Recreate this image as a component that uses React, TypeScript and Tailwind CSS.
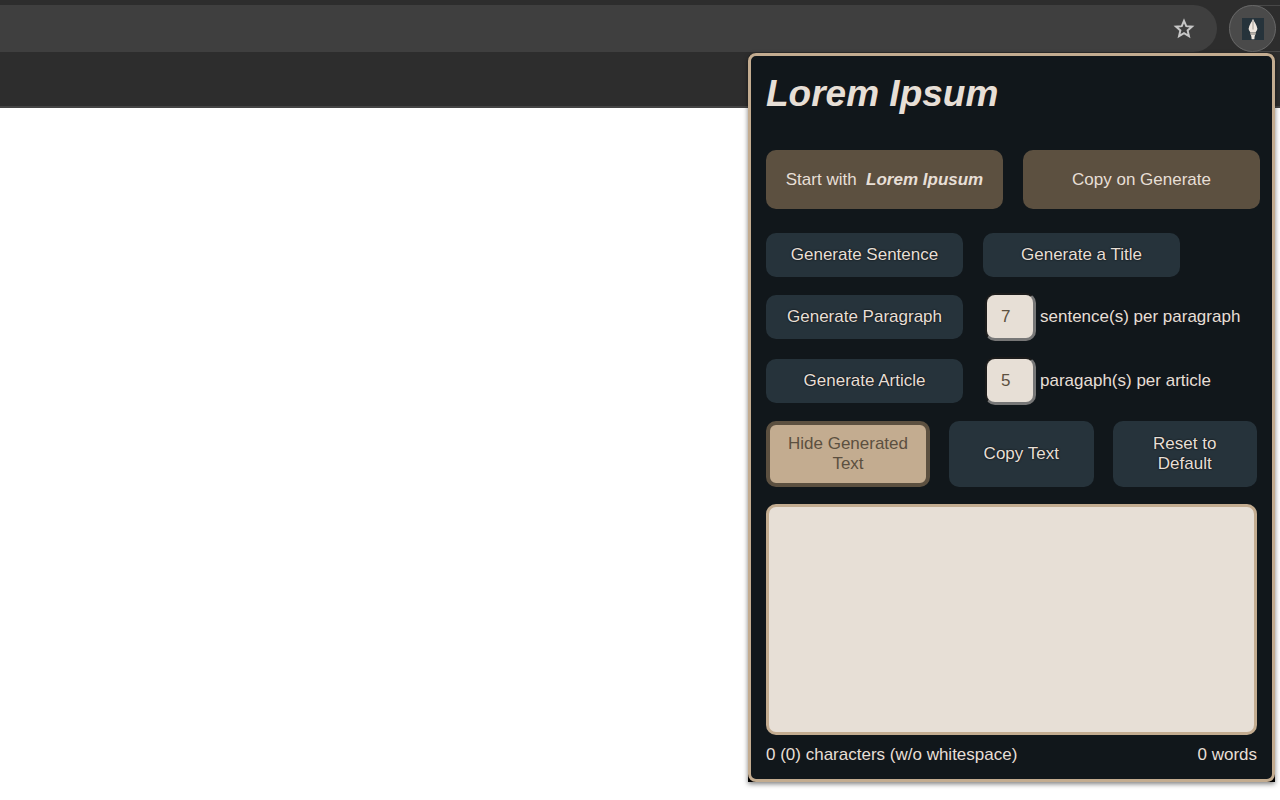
import { useState } from "react";

const actionButton =
  "rounded-[10px] bg-[#26333b] text-[#e7dfd6] text-center leading-5 text-shadow-[0_0_2px_#000]";
const toggleButton =
  "h-[59px] flex-1 rounded-[10px] bg-[#5c5040] text-[#e7dfd6] whitespace-pre";
const numberInput =
  "w-[51px] h-12 rounded-[10px] border-2 border-r-[3px] border-b-[3px] border-t-[#1c1c1c] border-l-[#1c1c1c] border-r-[#777777] border-b-[#777777] bg-[#e7dfd6] pl-[14px] text-[#5c5040]";

const StarIcon = () => (
  <svg width="24" height="24" viewBox="0 0 24 24" fill="none" stroke="#c7c7c7" strokeWidth="2" aria-hidden="true">
    <path d="M12 3.800l2.250 5.350 5.750.48-4.370 3.800 1.320 5.650L12 16.050l-4.950 3.030 1.320-5.650L4 9.630l5.750-.48z" />
  </svg>
);

const PenIcon = () => (
  <svg width="22" height="22" viewBox="0 0 22 22" aria-hidden="true">
    <rect width="22" height="22" fill="#26333b" />
    <path d="M11 .8C10.200 3.500 7 7 6.600 10.800c.2 1.500 1.200 2.600 1.800 3.700h5.200c.6-1.100 1.600-2.200 1.800-3.700C15 7 11.800 3.500 11 .8z" fill="#eee6de" />
    <path d="M11 3v8.500" stroke="#8b867e" strokeWidth="0.800" />
    <path d="M8.200 14.500h5.600v2H8.200z" fill="#b5ada4" />
    <path d="M8.600 16.500h4.800c-.7 1.200-.9 2.800-1 4.700H9.600c-.1-1.900-.3-3.500-1-4.700z" fill="#eee6de" />
  </svg>
);

const BrowserBar = () => (
  <header className="h-[108px] border-b-2 border-[#444444] bg-[#2d2d2d] pt-[5px]">
    <div className="flex items-center gap-3">
      <div className="flex h-[47px] flex-1 items-center justify-end rounded-r-full bg-[#3f3f3f] pr-[21px]">
        <button type="button" aria-label="Bookmark this page">
          <StarIcon />
        </button>
      </div>
      <div className="flex h-[47px] w-[51px] items-center rounded-l-full border-y border-[#484848]">
        <button
          type="button"
          aria-label="Lorem Ipsum"
          className="flex size-[47px] shrink-0 items-center justify-center rounded-full border border-[#686868] bg-[#4a4a4a]"
        >
          <PenIcon />
        </button>
      </div>
    </div>
  </header>
);

const Popup = () => {
  const [text, setText] = useState("");
  const [hidden, setHidden] = useState(false);
  const words = text.split(/\s+/).filter(Boolean).length;

  return (
    <section className="absolute top-[53px] right-[5px] w-[527px] rounded-t-lg bg-black shadow-[0_2px_5px_rgba(0,0,0,0.5)]">
      <div className="rounded-lg border-[3px] border-[#c3ac90] bg-[#11171b] px-[15px] pt-[14px] pb-3 text-[17px] leading-6 text-[#e7dfd6]">
        <h1 className="text-[37px] leading-[48px] font-bold italic">Lorem Ipsum</h1>

        <div className="-mr-[3px] mt-8 flex gap-5">
          <button type="button" aria-pressed="true" className={toggleButton}>
            Start with  <em className="font-bold">Lorem Ipusum</em>
          </button>
          <button type="button" aria-pressed="true" className={toggleButton}>
            Copy on Generate
          </button>
        </div>

        <div className="mt-6 flex gap-5">
          <button type="button" className={`${actionButton} h-11 w-[197px]`}>Generate Sentence</button>
          <button type="button" className={`${actionButton} h-11 w-[197px]`}>Generate a Title</button>
        </div>

        <div className="mt-4 flex items-center">
          <button type="button" className={`${actionButton} mr-[22px] h-11 w-[197px]`}>Generate Paragraph</button>
          <input id="sentences" type="number" min="1" defaultValue={7} className={numberInput} />
          <label htmlFor="sentences" className="ml-1">sentence(s) per paragraph</label>
        </div>

        <div className="mt-4 flex items-center">
          <button type="button" className={`${actionButton} mr-[22px] h-11 w-[197px]`}>Generate Article</button>
          <input id="paragraphs" type="number" min="1" defaultValue={5} className={numberInput} />
          <label htmlFor="paragraphs" className="ml-1">paragaph(s) per article</label>
        </div>

        <div className="mt-4 grid grid-cols-[164px_1fr_1fr] gap-[19px]">
          <button
            type="button"
            aria-pressed={!hidden}
            onClick={() => setHidden(!hidden)}
            className="h-[66px] rounded-[10px] border-4 border-[#5c5040] bg-[#c3ac90] px-3 leading-5 text-[#5c5040]"
          >
            Hide Generated Text
          </button>
          <button type="button" className={`${actionButton} px-5`}>Copy Text</button>
          <button type="button" className={`${actionButton} px-9`}>Reset to Default</button>
        </div>

        <textarea
          aria-label="Generated text"
          value={text}
          onChange={(e) => setText(e.target.value)}
          className={`mt-[17px] h-[231px] w-full resize-none rounded-[10px] border-[3px] border-[#c3ac90] bg-[#e7dfd6] p-3 text-[#5c5040] ${
            hidden ? "hidden" : "block"
          }`}
        />

        <div className="mt-2 flex justify-between">
          <span>
            {text.length} ({text.replace(/\s/g, "").length}) characters (w/o whitespace)
          </span>
          <span>{words} words</span>
        </div>
      </div>
    </section>
  );
};

export default function App() {
  return (
    <main className="relative min-h-screen bg-white font-['Liberation_Sans',Arial,sans-serif]">
      <BrowserBar />
      <Popup />
    </main>
  );
}
